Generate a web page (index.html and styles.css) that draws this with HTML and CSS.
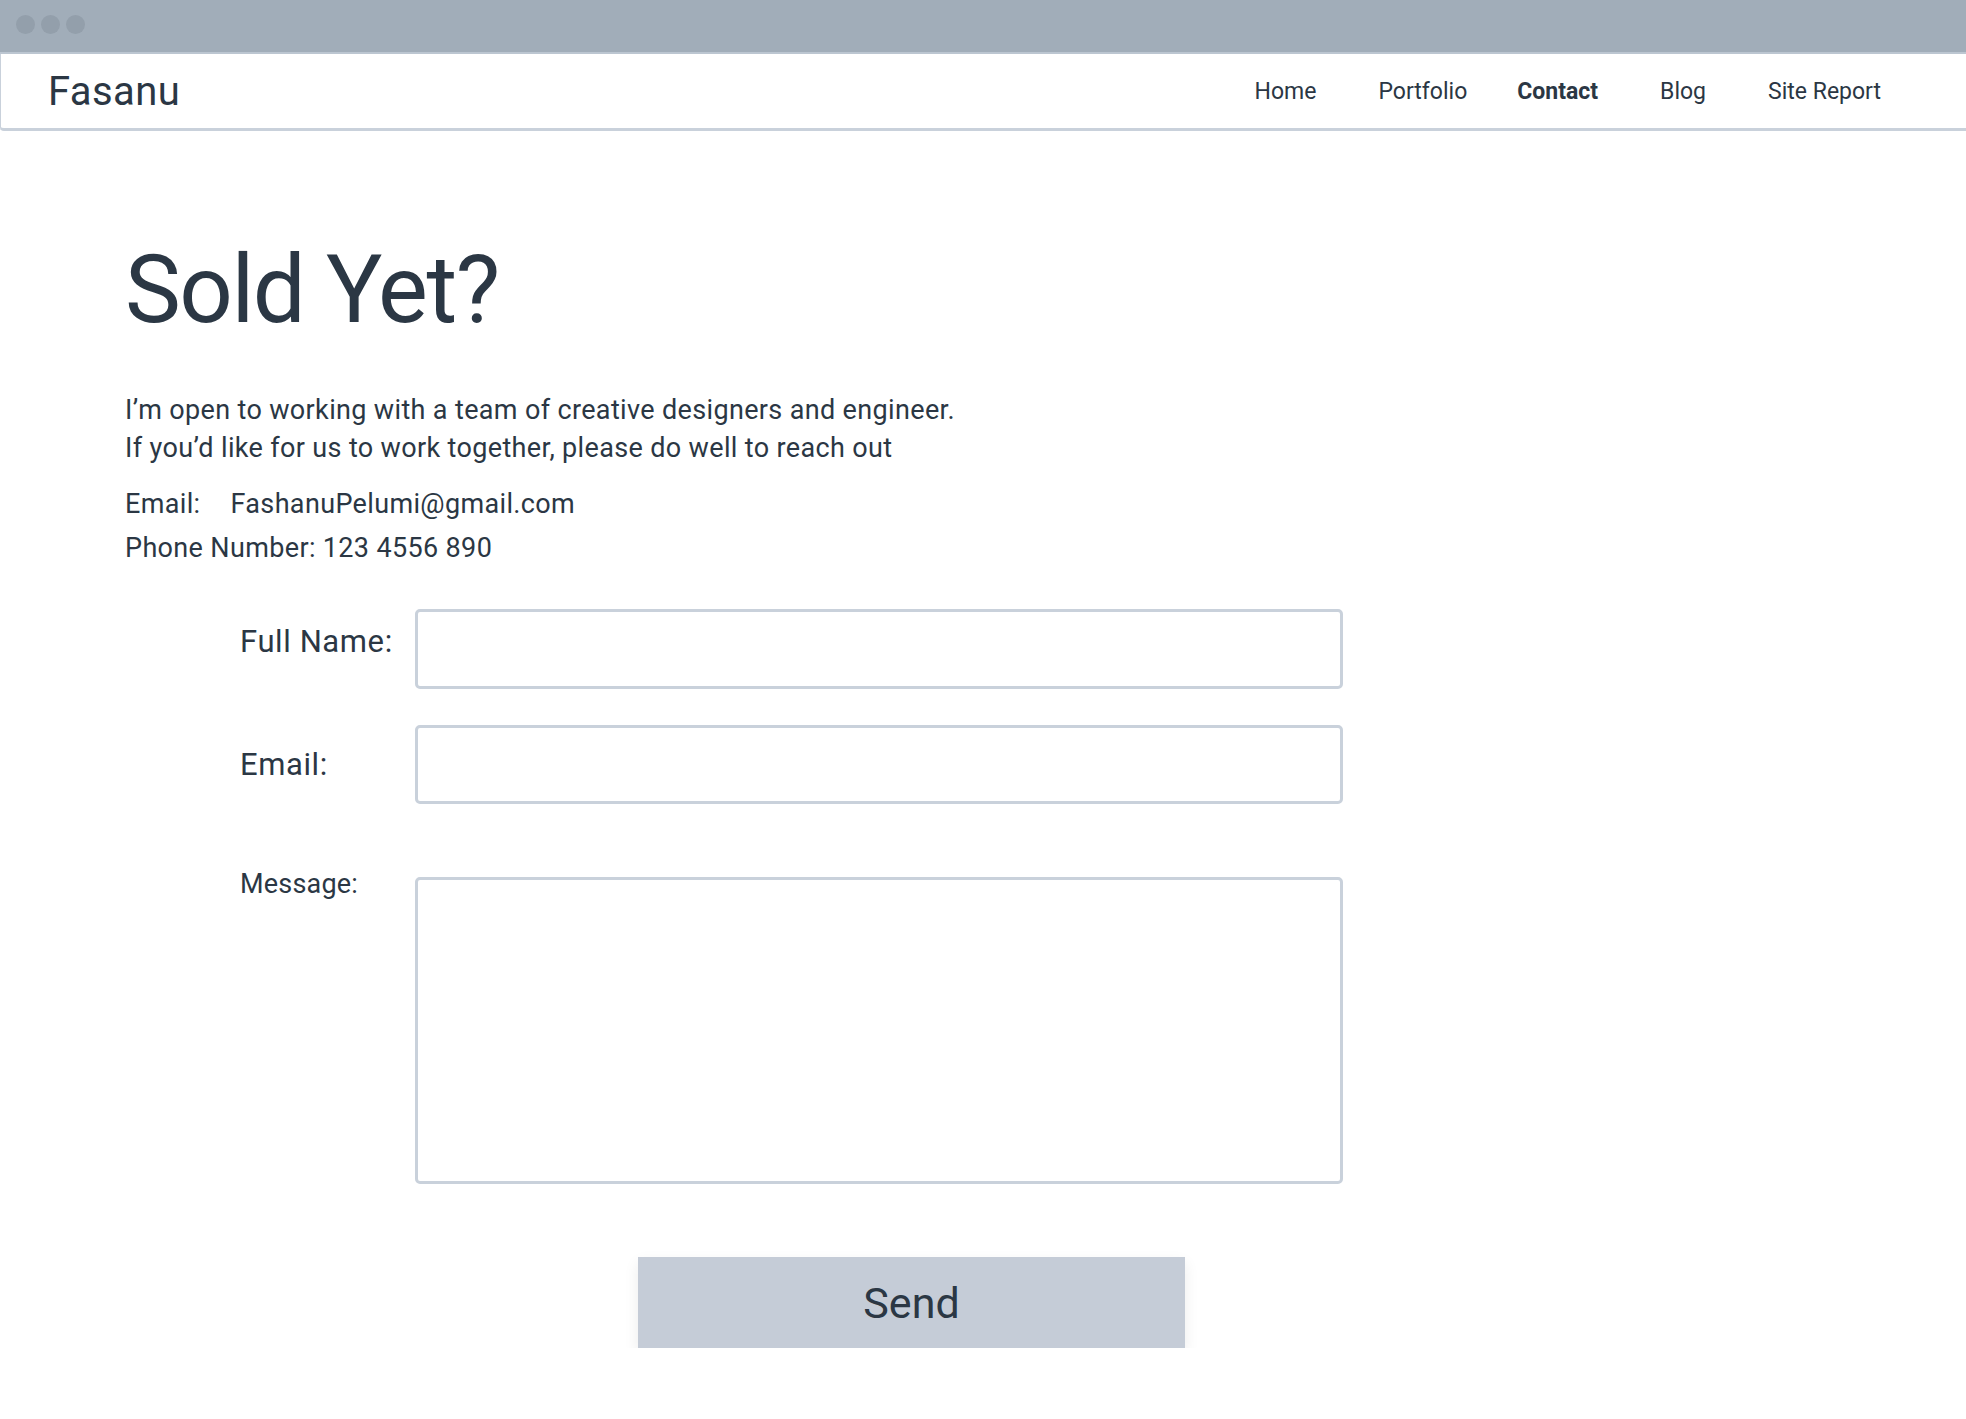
FILE: index.html
```html
<!DOCTYPE html>
<html lang="en">
<head>
<meta charset="utf-8">
<title>Fasanu — Contact</title>
<link rel="stylesheet" href="styles.css">
</head>
<body>
<div class="chrome">
  <span class="dot"></span><span class="dot"></span><span class="dot"></span>
</div>
<nav class="nav">
  <div class="brand">Fasanu</div>
  <ul class="links">
    <li><a href="#">Home</a></li>
    <li><a href="#">Portfolio</a></li>
    <li><a href="#" class="active">Contact</a></li>
    <li><a href="#">Blog</a></li>
    <li><a href="#">Site Report</a></li>
  </ul>
</nav>
<main class="main">
  <h1 class="title">Sold Yet?</h1>
  <p class="intro">I’m open to working with a team of creative designers and engineer.<br>If you’d like for us to work together, please do well to reach out</p>
  <div class="contact">
    <div class="contact-line"><span class="contact-key">Email:</span>FashanuPelumi@gmail.com</div>
    <div class="contact-line">Phone Number: 123 4556 890</div>
  </div>
  <form class="form">
    <div class="row row-name">
      <label class="label" for="name">Full Name:</label>
      <input class="field" id="name" type="text">
    </div>
    <div class="row row-email">
      <label class="label" for="email">Email:</label>
      <input class="field" id="email" type="email">
    </div>
    <div class="row row-message">
      <label class="label label-small" for="message">Message:</label>
      <textarea class="field area" id="message"></textarea>
    </div>
    <button class="send" type="button">Send</button>
  </form>
</main>
</body>
</html>
```

FILE: styles.css
```css
* { box-sizing: border-box; }

html, body {
  margin: 0;
  padding: 0;
  background: #ffffff;
}

body {
  font-family: Roboto, "Liberation Sans", sans-serif;
  color: #2b3744;
  overflow: hidden;
}

.chrome {
  height: 54px;
  background: #a1adb9;
  border-bottom: 2px solid #bcc6d1;
  display: flex;
  align-items: center;
  gap: 6px;
  padding-left: 16px;
  padding-bottom: 4px;
}

.dot {
  width: 19px;
  height: 19px;
  border-radius: 50%;
  background: #939fab;
}

.nav {
  height: 77px;
  display: flex;
  align-items: center;
  justify-content: space-between;
  padding: 0 54px 0 47px;
  border-bottom: 3px solid #c9d1db;
  border-left: 1px solid #c9d1db;
  border-bottom-left-radius: 4px;
}

.brand {
  font-size: 40px;
  letter-spacing: 0.4px;
  color: #2b3744;
}

.links {
  list-style: none;
  display: flex;
  margin: 0;
  padding: 0;
}

.links a {
  display: block;
  padding: 0 31px;
  font-size: 23px;
  color: #2b3744;
  text-decoration: none;
}

.links a.active {
  font-weight: 700;
  padding-left: 19px;
}

.main {
  padding-left: 125px;
}

.title {
  margin: 112px 0 0;
  font-size: 94px;
  line-height: 94px;
  font-weight: 400;
  letter-spacing: -1.5px;
}

.intro {
  margin: 54px 0 0;
  font-size: 27px;
  line-height: 38px;
  letter-spacing: 0.35px;
}

.contact {
  margin-top: 15px;
  font-size: 27px;
  line-height: 44px;
  letter-spacing: 0.35px;
}

.contact-key {
  margin-right: 30px;
}

.form {
  margin-top: 39px;
  padding-left: 115px;
}

.row {
  display: flex;
  align-items: center;
}

.row-email {
  margin-top: 36px;
}

.row-message {
  margin-top: 73px;
  align-items: flex-start;
}

.label {
  width: 175px;
  flex: none;
  font-size: 31px;
  letter-spacing: 0.6px;
}

.row-name .label {
  margin-bottom: 16px;
}

.label-small {
  font-size: 27px;
  letter-spacing: 0.2px;
  margin-top: -9px;
}

.field {
  width: 928px;
  height: 80px;
  border: 3px solid #c9d1db;
  border-radius: 5px;
  background: #ffffff;
  font-family: inherit;
  font-size: 24px;
  padding: 0 16px;
  outline: none;
}

.row-email .field {
  height: 79px;
}

.area {
  height: 307px;
  resize: none;
  padding: 14px 16px;
}

.send {
  display: block;
  margin: 73px 0 0 398px;
  width: 547px;
  height: 91px;
  border: none;
  border-radius: 0;
  background: #c5ccd7;
  color: #2b3744;
  font-family: inherit;
  font-size: 43px;
  box-shadow: 0 6px 14px rgba(0, 0, 0, 0.08);
  cursor: pointer;
}
```
